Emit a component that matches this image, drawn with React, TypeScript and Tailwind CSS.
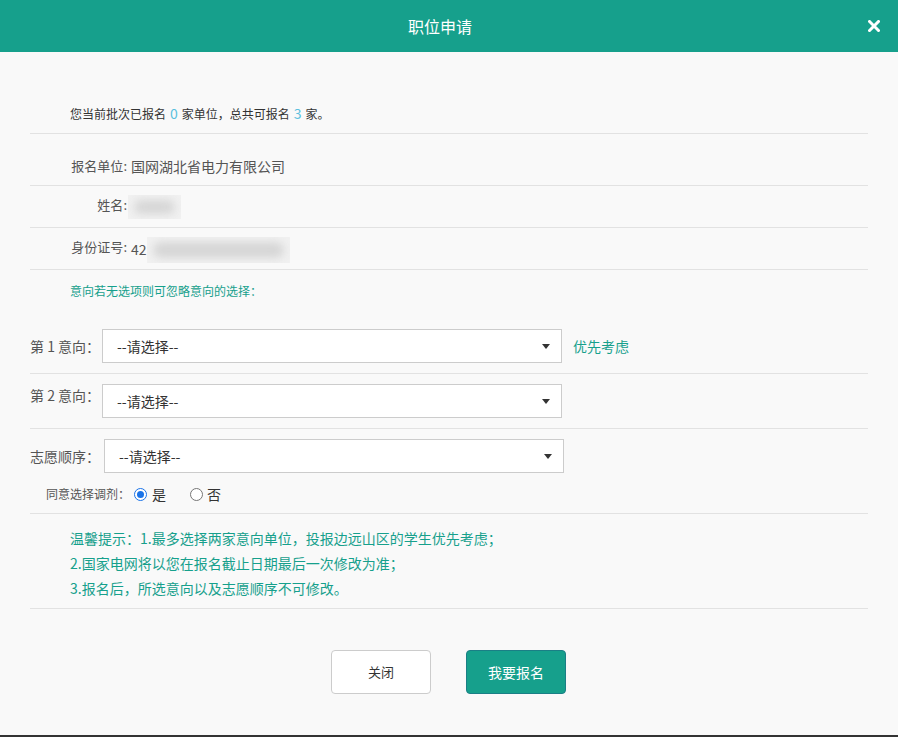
import type { ReactNode } from "react";

const FONT = "font-['Noto_Sans_CJK_SC','Noto_Sans',sans-serif]";

function Caret() {
  return (
    <svg width="8" height="5" viewBox="0 0 8 5" className="shrink-0">
      <path d="M0 0h8L4 5z" fill="#333" />
    </svg>
  );
}

function Select({ className = "" }: { className?: string }) {
  return (
    <div
      className={`flex h-[34px] w-[460px] items-center justify-between border border-[#ccc] bg-white pl-[14px] pr-[11px] text-[14px] text-[#333] ${className}`}
    >
      <span>--请选择--</span>
      <Caret />
    </div>
  );
}

function Radio({ checked }: { checked?: boolean }) {
  return (
    <span
      className={`flex h-[13px] w-[13px] items-center justify-center rounded-full border bg-white ${
        checked ? "border-[#1a73e8]" : "border-[#767676]"
      }`}
    >
      {checked && <span className="h-[7px] w-[7px] rounded-full bg-[#1a73e8]" />}
    </span>
  );
}

function Blur({ className }: { className: string }) {
  return (
    <span className={`relative inline-block overflow-hidden bg-[#f1f1f1] ${className}`}>
      <span className="absolute inset-x-[6px] inset-y-[5px] rounded-full bg-[#d6d6d6] blur-[4px]" />
    </span>
  );
}

function InfoRow({ label, children, className }: { label: string; children: ReactNode; className: string }) {
  return (
    <div className={`flex border-b border-[#e2e2e2] pl-[39px] text-[13px] leading-[20px] text-[#555] ${className}`}>
      <span className="w-[58px] shrink-0 whitespace-nowrap text-right">{label}:</span>
      {children}
    </div>
  );
}

export default function App() {
  return (
    <div className={`h-[737px] w-[898px] overflow-hidden bg-[#333] ${FONT}`}>
      <div className="flex h-[735px] flex-col bg-[#f9f9f9]">
        <header className="relative flex h-[52px] shrink-0 items-center justify-center bg-[#16a08c] pr-[18px] text-[16px] text-white">
          <span className="pb-[1px]">职位申请</span>
          <svg
            width="12"
            height="12"
            viewBox="0 0 12 12"
            className="absolute right-[18px] top-[20px]"
          >
            <path d="M1.5 1.5l9 9M10.5 1.5l-9 9" stroke="#fff" strokeWidth="3" strokeLinecap="square" />
          </svg>
        </header>

        <div className="px-[30px]">
          <div className="mt-[42px] flex h-[40px] items-center border-b border-[#e2e2e2] pl-[40px] text-[12px] text-[#333]">
            您当前批次已报名<span className="mx-[4px] text-[14px] text-[#5bc0de]">0</span>家单位，总共可报名
            <span className="mx-[4px] text-[14px] text-[#5bc0de]">3</span>家。
          </div>

          <InfoRow label="报名单位" className="h-[52px] pt-[22px]">
            <span className="ml-[4px] text-[14px]">国网湖北省电力有限公司</span>
          </InfoRow>

          <InfoRow label="姓名" className="h-[42px] pt-[9px]">
            <Blur className="ml-[1px] h-[24px] w-[53px]" />
          </InfoRow>

          <InfoRow label="身份证号" className="h-[42px] pt-[9px]">
            <span className="ml-[4px] pt-[2px] text-[14px]">42</span>
            <Blur className="h-[26px] w-[143px]" />
          </InfoRow>

          <div className="border-b border-[#e2e2e2] pb-[10px] pt-[11px]">
            <p className="pl-[40px] text-[12px] leading-[20px] text-[#16a08c]">意向若无选项则可忽略意向的选择：</p>
            <div className="mt-[28px] flex items-center text-[14px] text-[#555]">
              <span className="w-[72px] whitespace-nowrap">第 1 意向：</span>
              <Select />
              <span className="ml-[11px] text-[#16a08c]">优先考虑</span>
            </div>
          </div>

          <div className="flex items-start border-b border-[#e2e2e2] pb-[10px] pt-[10px] text-[14px] text-[#555]">
            <span className="w-[72px] whitespace-nowrap pt-[1px]">第 2 意向：</span>
            <Select />
          </div>

          <div className="border-b border-[#e2e2e2] pb-[9px] pt-[10px]">
            <div className="flex items-center text-[14px] text-[#555]">
              <span className="w-[74px] whitespace-nowrap">志愿顺序：</span>
              <Select />
            </div>
            <div className="mt-[11px] flex h-[20px] items-center pl-[16px] text-[12px] text-[#555]">
              <span>同意选择调剂：</span>
              <span className="ml-[4px]">
                <Radio checked />
              </span>
              <span className="ml-[5px] text-[14px] text-[#333]">是</span>
              <span className="ml-[24px]">
                <Radio />
              </span>
              <span className="ml-[4px] text-[14px] text-[#333]">否</span>
            </div>
          </div>

          <div className="border-b border-[#e2e2e2] pb-[7px] pl-[40px] pt-[12px] text-[14px] leading-[25px] text-[#16a08c]">
            <p>温馨提示：1.最多选择两家意向单位，投报边远山区的学生优先考虑；</p>
            <p>2.国家电网将以您在报名截止日期最后一次修改为准；</p>
            <p>3.报名后，所选意向以及志愿顺序不可修改。</p>
          </div>

          <div className="mt-[41px] flex justify-center gap-[35px] pr-[1px]">
            <button
              type="button"
              className="h-[44px] w-[100px] rounded-[4px] border border-[#ccc] bg-white text-[13px] text-[#333]"
            >
              关闭
            </button>
            <button
              type="button"
              className="h-[44px] w-[100px] rounded-[4px] border border-[#1b7f86] bg-[#16a08c] text-[14px] text-white"
            >
              我要报名
            </button>
          </div>
        </div>
      </div>
    </div>
  );
}
